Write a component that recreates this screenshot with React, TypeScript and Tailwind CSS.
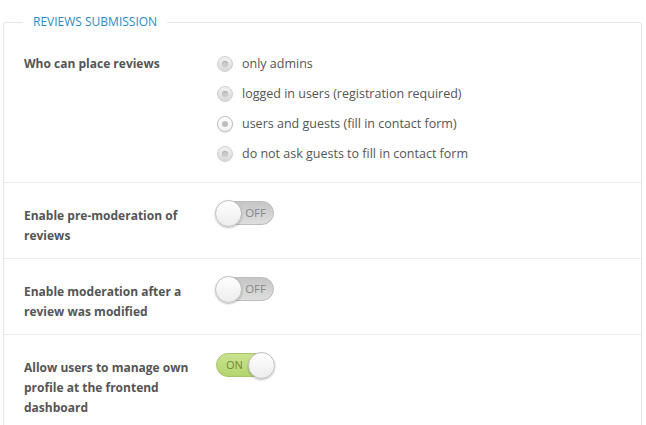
const FONT = { fontFamily: '"Open Sans", "Liberation Sans", sans-serif' };

const OPTIONS = [
  { label: 'only admins', checked: false },
  { label: 'logged in users (registration required)', checked: false },
  { label: 'users and guests (fill in contact form)', checked: true },
  { label: 'do not ask guests to fill in contact form', checked: false },
];

function Radio({ checked }: { checked: boolean }) {
  return (
    <span
      className={
        'flex h-[16px] w-[16px] shrink-0 items-center justify-center rounded-full border ' +
        (checked
          ? 'border-[#bdbdbd] bg-gradient-to-b from-white to-[#f3f3f3] shadow-[0_1px_1px_rgba(0,0,0,0.1)]'
          : 'border-[#cfcfcf] bg-gradient-to-b from-[#f2f2f2] to-[#d8d8d8]')
      }
    >
      <span
        className={
          'h-[6px] w-[6px] rounded-full ' +
          (checked ? 'bg-[#bdbdbd]' : 'bg-[#cacaca] shadow-[inset_0_1px_1px_rgba(0,0,0,0.15)]')
        }
      />
    </span>
  );
}

function Toggle({ on }: { on: boolean }) {
  if (on) {
    return (
      <div className="relative flex h-[24px] w-[58px] items-center rounded-full border border-[#a9c46a] bg-gradient-to-b from-[#c9e38f] to-[#b4d46e]">
        <span className="pl-[9px] text-[11px] text-[#6f8a3c]">ON</span>
        <span className="absolute right-[-2px] top-[-2px] h-[27px] w-[27px] rounded-full border border-[#bdbdbd] bg-gradient-to-b from-white to-[#ececec] shadow-[0_1px_2px_rgba(0,0,0,0.25)]" />
      </div>
    );
  }
  return (
    <div className="relative flex h-[24px] w-[58px] items-center justify-end rounded-full border border-[#bdbdbd] bg-gradient-to-b from-[#c6c6c6] to-[#dedede]">
      <span className="pr-[7px] text-[11.5px] text-[#888]">OFF</span>
      <span className="absolute left-[-2px] top-[-2px] h-[27px] w-[27px] rounded-full border border-[#bdbdbd] bg-gradient-to-b from-white to-[#ececec] shadow-[0_1px_2px_rgba(0,0,0,0.25)]" />
    </div>
  );
}

function Row({ label, children, last }: { label: string; children: React.ReactNode; last?: boolean }) {
  return (
    <div className={'flex px-[20px] pt-[23px] pb-[12px] ' + (last ? '' : 'border-b border-[#ebebeb]')}>
      <div className="w-[192px] shrink-0 pr-[12px] text-[12px] font-bold leading-[20px] text-[#555]">{label}</div>
      <div className="-mt-[5px]">{children}</div>
    </div>
  );
}

export default function App() {
  return (
    <div className="h-[425px] w-[646px] overflow-hidden bg-white pl-[3px] pr-[4px] pt-[13px]" style={FONT}>
      <fieldset className="m-0 rounded-[3px] border border-[#e6e6e6] p-0">
        <legend className="ml-[19px] px-[10px] text-[12px] leading-[18px] text-[#2a8bc9]">REVIEWS SUBMISSION</legend>
        <div className="flex border-b border-[#ebebeb] px-[20px] pt-[23px] pb-[13px]">
          <div className="w-[192px] shrink-0 text-[12px] font-bold leading-[20px] text-[#555]">Who can place reviews</div>
          <div className="-mt-[5px] flex flex-col">
            {OPTIONS.map((o) => (
              <div key={o.label} className="flex h-[30px] items-center gap-[9px] pl-[1px]">
                <Radio checked={o.checked} />
                <span className="text-[12.5px] text-[#555]">{o.label}</span>
              </div>
            ))}
          </div>
        </div>
        <Row label="Enable pre-moderation of reviews">
          <Toggle on={false} />
        </Row>
        <Row label="Enable moderation after a review was modified">
          <Toggle on={false} />
        </Row>
        <Row label="Allow users to manage own profile at the frontend dashboard" last>
          <Toggle on={true} />
        </Row>
      </fieldset>
    </div>
  );
}
